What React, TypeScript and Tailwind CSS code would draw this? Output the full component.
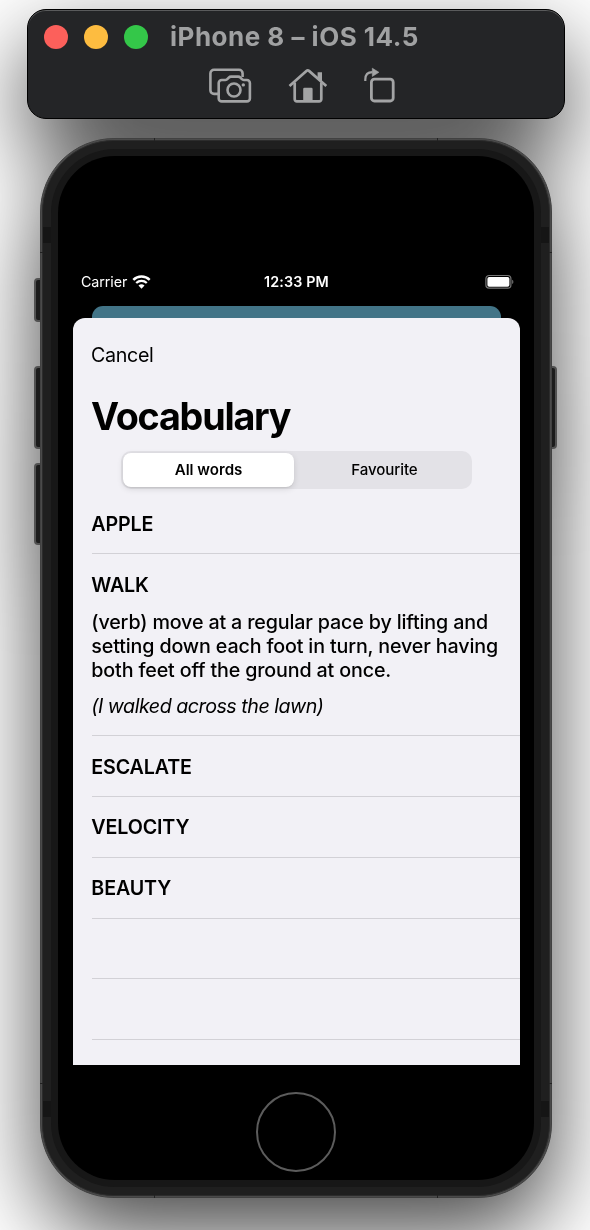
import React from "react";

type Entry = { word: string; definition?: string; example?: string };

const entries: Entry[] = [
  { word: "APPLE" },
  {
    word: "WALK",
    definition:
      "(verb) move at a regular pace by lifting and\nsetting down each foot in turn, never having\nboth feet off the ground at once.",
    example: "(I walked across the lawn)",
  },
  { word: "ESCALATE" },
  { word: "VELOCITY" },
  { word: "BEAUTY" },
  { word: "" },
  { word: "" },
];

function ScreenshotIcon() {
  return (
    <svg width="44" height="38" viewBox="0 0 44 38" fill="none" stroke="#a3a4a5" strokeWidth="2.6" strokeLinejoin="round">
      <path d="M10.200 27.900H6a3.600 3.600 0 0 1-3.600-3.600V7.400A3.600 3.600 0 0 1 6 3.800h25a3.600 3.600 0 0 1 3.600 3.600V11" />
      <path d="M13.700 14h3.600c1.200 0 1.800-.5 2.500-1.300l1-1.100c.7-.8 1.300-1 2.300-1h7c1 0 1.600.2 2.300 1l1 1.100c.7.8 1.300 1.300 2.500 1.300h3a3 3 0 0 1 3 3v15.400a3 3 0 0 1-3 3H13.700a3 3 0 0 1-3-3V17a3 3 0 0 1 3-3Z" />
      <circle cx="26" cy="24" r="6.500" />
      <circle cx="35.300" cy="18.900" r="1.700" fill="#a3a4a5" stroke="none" />
    </svg>
  );
}

function HomeIcon() {
  return (
    <svg width="40" height="38" viewBox="0 0 40 38" fill="none" stroke="#a3a4a5" strokeWidth="2.7" strokeLinejoin="round">
      <path d="M1.500 20 18.400 4.900a2 2 0 0 1 2.600 0L38.300 20" />
      <path d="M6.700 16.500v16.700a2.200 2.200 0 0 0 2.200 2.200h22.200a2.200 2.200 0 0 0 2.200-2.200V16.500" />
      <path d="M29.600 6.200h4.400v11L29.600 13Z" fill="#a3a4a5" stroke="none" />
      <path d="M15.200 35V23a1.300 1.300 0 0 1 1.300-1.300h6.800a1.300 1.300 0 0 1 1.300 1.300v12Z" fill="#a3a4a5" stroke="none" />
    </svg>
  );
}

function RotateIcon() {
  return (
    <svg width="34" height="38" viewBox="0 0 34 38" fill="none" stroke="#a3a4a5">
      <path d="M2.300 15v-1.500c0-4.700 2.200-7.300 7.200-7.300" strokeWidth="2.200" />
      <path d="M9.300 2.200v8.200l6.600-4.100Z" fill="#a3a4a5" stroke="#a3a4a5" strokeWidth=".6" strokeLinejoin="round" />
      <rect x="8.400" y="13.200" width="21.800" height="21.800" rx="3" strokeWidth="2.800" />
    </svg>
  );
}

function WifiIcon() {
  return (
    <svg width="19" height="14" viewBox="0 0 19 14" fill="none" stroke="#fff">
      <path d="M1.300 4.900a11.900 11.900 0 0 1 16.400 0" strokeWidth="2.500" />
      <path d="M4.200 8a7.700 7.700 0 0 1 10.600 0" strokeWidth="2.300" />
      <path d="M9.500 13.700 6.500 10.600a4.300 4.300 0 0 1 6 0Z" fill="#fff" stroke="none" />
    </svg>
  );
}

function BatteryIcon() {
  return (
    <svg width="30" height="16" viewBox="0 0 30 16" fill="none">
      <rect x=".9" y="1.500" width="25" height="12.700" rx="3.200" stroke="#777" strokeWidth="1.200" />
      <rect x="2.400" y="3" width="22" height="9.700" rx="1.800" fill="#fff" />
      <path d="M27.200 5.700c1.600.6 1.600 3.700 0 4.300Z" fill="#777" />
    </svg>
  );
}

function Toolbar() {
  return (
    <header className="ml-[27px] h-[110px] w-[538px] rounded-[19px] border border-black bg-[#242527] shadow-[inset_0_1px_0_#5a5b5c]">
      <div className="flex h-[54px] items-center pl-4">
        <div className="flex gap-4">
          <span className="size-6 rounded-full bg-[#fc605b]" />
          <span className="size-6 rounded-full bg-[#fdbc40]" />
          <span className="size-6 rounded-full bg-[#34c749]" />
        </div>
        <h1 className="ml-[22px] whitespace-nowrap text-[26px] font-bold leading-none tracking-[0.5px] text-[#a0a1a2]">iPhone 8 – iOS 14.5</h1>
      </div>
      <div className="flex pt-[1.500px] pl-[180px]">
        <ScreenshotIcon />
        <div className="ml-9 flex"><HomeIcon /></div>
        <div className="ml-[35px] flex"><RotateIcon /></div>
      </div>
    </header>
  );
}

function Segments() {
  return (
    <div className="mt-[9px] ml-[29.500px] flex h-[38px] w-[351px] rounded-[10px] bg-[#e3e2e7] p-[2px] text-[15.100px] text-black">
      <div className="flex w-[171px] items-center justify-center rounded-[8px] bg-white font-semibold shadow-[0_2px_6px_rgba(0,0,0,0.12),0_1px_1px_rgba(0,0,0,0.06)]">All words</div>
      <div className="flex flex-1 items-center justify-center pl-[5px] font-medium tracking-[-0.1px]">Favourite</div>
    </div>
  );
}

function Row({ word, definition, example }: Entry) {
  return (
    <li className="border-b border-[#d2d1d6]">
      <div className="-ml-[0.200px] flex h-[59.800px] items-center pt-[2.500px] text-[19.700px] font-semibold tracking-[-0.15px]">{word}</div>
      {definition && (
        <p className="-mt-[4.300px] -ml-[0.200px] whitespace-pre text-[19.700px] font-medium leading-[24.300px] tracking-[-0.150px]">{definition}</p>
      )}
      {example && <p className="mt-[11.500px] mb-[16.800px] -ml-[0.200px] whitespace-pre text-[19.700px] italic leading-[24.300px] tracking-[-0.500px]">{example}</p>}
    </li>
  );
}

function Screen() {
  return (
    <div className="ml-[15px] flex h-[803px] w-[447px] flex-col overflow-hidden">
      <div className="grid h-[44px] shrink-0 grid-cols-3 items-center pr-[5px] pb-[4px] pl-2 text-[14.300px] text-white">
        <div className="flex items-center gap-[5px] tracking-[-0.1px]">Carrier<WifiIcon /></div>
        <div className="whitespace-nowrap pr-[3px] text-center font-semibold tracking-[0.150px]">12:33 PM</div>
        <div className="flex justify-end"><BatteryIcon /></div>
      </div>
      <div className="mx-[19px] h-3 shrink-0 rounded-t-[11px] bg-[#427487]" />
      <main className="flex-1 overflow-hidden rounded-t-[12px] bg-[#f2f1f6] pl-[18.500px] text-black">
        <div className="-ml-[0.500px] flex h-[75px] items-center pt-[1px] text-[19.700px] tracking-[-0.350px]">Cancel</div>
        <h2 className="-ml-[0.500px] flex h-[49px] items-center pb-[2px] text-[37.700px] font-bold tracking-[-1.200px]">Vocabulary</h2>
        <Segments />
        <ul className="mt-[4.500px]">
          {entries.map((entry, i) => <Row key={i} {...entry} />)}
        </ul>
      </main>
    </div>
  );
}

function Phone() {
  return (
    <section className="relative mt-[19px] ml-[40px] h-[1060px] w-[512px]">
      <i className="absolute top-[140px] -left-[6px] h-[44px] w-3 rounded-[4px] border-2 border-[#525252] bg-[#1b1b1b]" />
      <i className="absolute top-[228px] -left-[6px] h-[83px] w-3 rounded-[4px] border-2 border-[#525252] bg-[#1b1b1b]" />
      <i className="absolute top-[325px] -left-[6px] h-[82px] w-3 rounded-[4px] border-2 border-[#525252] bg-[#1b1b1b]" />
      <i className="absolute top-[228px] -right-[5px] h-[83px] w-3 rounded-[4px] border-2 border-[#525252] bg-[#1b1b1b]" />
      <div className="relative h-full rounded-[74px] border border-[#414141] bg-[#4a4a4a] p-px">
        <div className="h-full rounded-[72px] border border-[#2c2c2c] bg-[#1f1f1f] p-2">
          <div className="h-full rounded-[64px] bg-[#171717] p-[7px]">
            <div className="flex h-full flex-col rounded-[57px] bg-black pt-[106px]">
              <Screen />
              <span className="mt-[27px] ml-[198px] size-20 shrink-0 rounded-full border-2 border-[#5c5c5c]" />
            </div>
          </div>
        </div>
      </div>
      <i className="absolute top-[89px] left-[3px] h-4 w-2 bg-[#151515]" />
      <i className="absolute top-[89px] right-[3px] h-4 w-2 bg-[#151515]" />
      <i className="absolute top-[963px] left-[3px] h-4 w-2 bg-[#151515]" />
      <i className="absolute top-[963px] right-[3px] h-4 w-2 bg-[#151515]" />
      <i className="absolute top-[114px] left-0 h-px w-[3px] bg-[#222]" />
      <i className="absolute top-[114px] right-0 h-px w-[3px] bg-[#222]" />
      <i className="absolute top-[945px] left-0 h-px w-[3px] bg-[#222]" />
      <i className="absolute top-[945px] right-0 h-px w-[3px] bg-[#222]" />
      <i className="absolute top-0 left-[114px] h-[3px] w-px bg-[#222]" />
      <i className="absolute top-0 right-[114px] h-[3px] w-px bg-[#222]" />
      <i className="absolute bottom-0 left-[114px] h-[3px] w-px bg-[#222]" />
      <i className="absolute right-[114px] bottom-0 h-[3px] w-px bg-[#222]" />
    </section>
  );
}

export default function App() {
  return (
    <div className="h-[1230px] w-[590px] overflow-hidden bg-white font-['Inter','Liberation_Sans',sans-serif]">
      <div className="flex w-[590px] flex-col pt-[9px] drop-shadow-[0_36px_44px_rgba(0,0,0,0.72)]">
        <Toolbar />
        <Phone />
      </div>
    </div>
  );
}
